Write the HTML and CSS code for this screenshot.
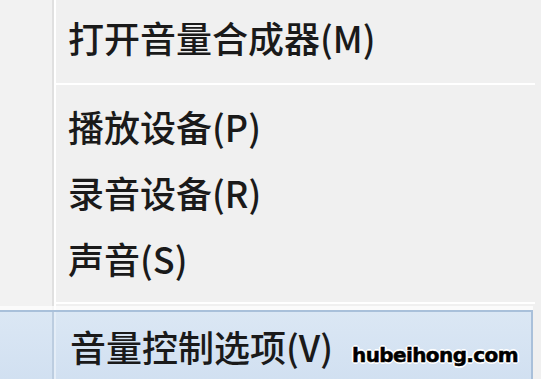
FILE: index.html
```html
<!DOCTYPE html>
<html lang="zh-CN">
<head>
<meta charset="utf-8">
<title>音量菜单</title>
<link rel="stylesheet" href="styles.css">
</head>
<body>
<div class="menu">
  <div class="item">打开音量合成器(M)</div>
  <div class="sep"></div>
  <div class="item">播放设备(P)</div>
  <div class="item">录音设备(R)</div>
  <div class="item">声音(S)</div>
  <div class="sep sep-last"></div>
  <div class="item item-hot">音量控制选项(V)</div>
  <div class="watermark">hubeihong.com</div>
</div>
</body>
</html>
```

FILE: styles.css
```css
html, body {
  margin: 0;
  padding: 0;
}
body {
  width: 541px;
  height: 379px;
  overflow: hidden;
  background: #f0f0f0;
}
.menu {
  position: relative;
  height: 379px;
  padding-top: 4px;
  box-sizing: border-box;
  display: flex;
  flex-direction: column;
  background-color: #f0f0f0;
  background-image: linear-gradient(to right,
    #f2f2f2 0, #f2f2f2 52px,
    #e0e0e0 52px, #e0e0e0 54px,
    #ffffff 54px, #ffffff 56px,
    transparent 56px);
  font-family: "Noto Sans CJK SC", "Noto Sans", sans-serif;
  font-size: 36px;
  font-weight: 500;
  color: #1a1a1a;
}
.item {
  height: 66px;
  line-height: 66px;
  padding-left: 68px;
  white-space: nowrap;
}
.sep {
  margin: 13px 6px 8px 56px;
  height: 2px;
  background: #e2e2e2;
  border-bottom: 2px solid #ffffff;
}
.sep-last {
  margin: 11px 6px 0 56px;
}
.item-hot {
  margin-top: 6px;
  margin-left: -2px;
  width: 535px;
  padding-left: 70px;
  padding-top: 1px;
  height: 80px;
  line-height: 66px;
  box-sizing: border-box;
  border: 2px solid #a9c0da;
  box-shadow: 0 -4px 0 rgba(255, 255, 255, 0.7);
  background-color: #d5e3f2;
  background-image: linear-gradient(to right,
    transparent 52px,
    #bccde0 52px, #bccde0 54px,
    #e4edf7 54px, #e4edf7 56px,
    transparent 56px),
    linear-gradient(to bottom, #dbe7f4, #d1e0f1);
}
.watermark {
  position: absolute;
  left: 352px;
  top: 345px;
  font-family: "DejaVu Sans", sans-serif;
  font-weight: bold;
  font-size: 20px;
  line-height: 20px;
  color: #000;
  letter-spacing: -0.6px;
  -webkit-text-stroke: 0.5px #000;
  text-shadow:
    1px 0 0 #fff, -1px 0 0 #fff, 0 1px 0 #fff, 0 -1px 0 #fff,
    1px 1px 0 #fff, -1px -1px 0 #fff, 1px -1px 0 #fff, -1px 1px 0 #fff,
    2px 0 0 #fff, -2px 0 0 #fff, 0 2px 0 #fff, 0 -2px 0 #fff;
}
```
